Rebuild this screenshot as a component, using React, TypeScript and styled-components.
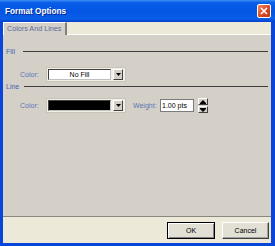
import React from 'react';
import styled, { createGlobalStyle } from 'styled-components';

const GlobalStyle = createGlobalStyle`
  html, body { margin: 0; padding: 0; }
  body {
    width: 275px;
    height: 246px;
    overflow: hidden;
    font-family: 'Liberation Sans', Arial, sans-serif;
  }
`;

const Window = styled.div`
  width: 275px;
  height: 246px;
  box-sizing: border-box;
  display: flex;
  flex-direction: column;
  background: #0845d8;
`;

const TitleBar = styled.div`
  height: 22px;
  flex: none;
  display: flex;
  align-items: center;
  justify-content: space-between;
  padding: 0 4px 0 5px;
  background: linear-gradient(#3c8cf6 0%, #0a5ee8 12%, #0354e4 50%, #0a5ee8 85%, #0440cc 100%);
`;

const Title = styled.span`
  color: #fff;
  font-weight: bold;
  font-size: 8.2px;
  text-shadow: 1px 1px 0 #0a2a8a;
`;

const CloseButton = styled.div`
  width: 14px;
  height: 14px;
  box-sizing: border-box;
  border: 1px solid #fff;
  border-radius: 2px;
  background: linear-gradient(135deg, #f08a6a, #d8441e 60%, #c2381a);
  display: flex;
  align-items: center;
  justify-content: center;
`;

const Body = styled.div`
  flex: 1;
  margin: 0 4px 3px 3px;
  display: flex;
  flex-direction: column;
  background: #ece9d8;
`;

const TabStrip = styled.div`
  height: 13px;
  flex: none;
  display: flex;
  background: #ece9d8;
  box-shadow: inset 0 -1px 0 #fff;
`;

const Tab = styled.div`
  width: 64px;
  box-sizing: border-box;
  background: #d4d0c8;
  border-top: 1px solid #fff;
  border-left: 1px solid #fff;
  border-right: 2px solid #808080;
  padding-left: 3px;
  font-size: 7.2px;
  line-height: 11px;
  color: #566c9c;
  white-space: nowrap;
`;

const Panel = styled.div`
  flex: 1;
  background: #d4d0c8;
  padding: 12px 3px 0 3px;
`;

const GroupHeader = styled.div<{ $gap: number }>`
  height: 8px;
  display: flex;
  align-items: center;
  gap: ${(p) => p.$gap}px;
  font-size: 7px;
  color: #4466b0;
  &::after {
    content: '';
    flex: 1;
    border-top: 1px solid #3c3c3c;
  }
`;

const Row = styled.div<{ $top: number }>`
  height: 15px;
  margin-top: ${(p) => p.$top}px;
  padding-left: 14px;
  display: flex;
  align-items: center;
`;

const Label = styled.span<{ $w: number; $ml?: number }>`
  width: ${(p) => p.$w}px;
  margin-left: ${(p) => p.$ml ?? 0}px;
  flex: none;
  font-size: 7px;
  color: #5c76b4;
`;

const Combo = styled.div`
  width: 80px;
  height: 15px;
  box-sizing: border-box;
  background: #f1efe5;
  border: 1px solid #c8c5b8;
  padding: 1px 2px 1px 1px;
  display: flex;
  gap: 2px;
`;

const ComboField = styled.div<{ $fill: string }>`
  flex: 1;
  background: ${(p) => p.$fill};
  border: 1px solid #404040;
  border-right-color: #c0c0c0;
  border-bottom-color: #c0c0c0;
  font-size: 7px;
  line-height: 9px;
  text-align: center;
  color: #000;
`;

const ArrowButton = styled.div`
  width: 10px;
  box-sizing: border-box;
  background: #d4d0c8;
  border: 1px solid;
  border-color: #fff #404040 #404040 #fff;
  display: flex;
  align-items: center;
  justify-content: center;
`;

const WeightInput = styled.div`
  width: 34px;
  height: 13px;
  box-sizing: border-box;
  background: #fff;
  border: 1px solid #7a7a7a;
  font-size: 7px;
  line-height: 11px;
  padding-left: 1px;
  color: #000;
`;

const Spinner = styled.div`
  width: 10px;
  height: 15px;
  margin-left: 4px;
  display: flex;
  flex-direction: column;
  gap: 1px;
`;

const SpinButton = styled.div`
  flex: 1;
  box-sizing: border-box;
  background: #d4d0c8;
  border: 1px solid;
  border-color: #fff #404040 #404040 #fff;
  display: flex;
  align-items: center;
  justify-content: center;
`;

const Footer = styled.div`
  height: 25px;
  flex: none;
  border-top: 1px solid #8a887e;
  background: #ece9d8;
  display: flex;
  justify-content: flex-end;
  align-items: center;
  gap: 7px;
  padding: 1px 2px 0 0;
`;

const Button = styled.div<{ $w: number; $default?: boolean }>`
  width: ${(p) => p.$w}px;
  height: 17px;
  box-sizing: border-box;
  background: #e2dfd5;
  border: 1px solid;
  border-color: ${(p) => (p.$default ? '#000' : '#fff #404040 #404040 #fff')};
  box-shadow: ${(p) => (p.$default ? 'inset 1px 1px 0 #fff, inset -1px -1px 0 #808080' : 'inset -1px -1px 0 #a0a0a0')};
  font-size: 7px;
  display: flex;
  align-items: center;
  justify-content: center;
  color: #000;
`;

const DownArrow = () => (
  <svg width="5" height="3" viewBox="0 0 5 3">
    <path d="M0 0h5L2.5 3z" fill="#000" />
  </svg>
);

const SpinArrow = ({ up }: { up?: boolean }) => (
  <svg width="6" height="4" viewBox="0 0 6 4">
    {up ? (
      <path d="M3 0L6 3H0z M0 3h6v1H0z" fill="#000" />
    ) : (
      <path d="M0 0h6v1H0z M0 1h6L3 4z" fill="#000" />
    )}
  </svg>
);

const App = () => {
  return (
    <>
      <GlobalStyle />
      <Window>
        <TitleBar>
          <Title>Format Options</Title>
          <CloseButton>
            <svg width="8" height="8" viewBox="0 0 8 8">
              <path d="M1 1L7 7M7 1L1 7" stroke="#fff" strokeWidth="1.6" />
            </svg>
          </CloseButton>
        </TitleBar>
        <Body>
          <TabStrip>
            <Tab>Colors And Lines</Tab>
          </TabStrip>
          <Panel>
            <GroupHeader $gap={8}>Fill</GroupHeader>
            <Row $top={12}>
              <Label $w={26}>Color:</Label>
              <Combo>
                <ComboField $fill="#fff">No Fill</ComboField>
                <ArrowButton>
                  <DownArrow />
                </ArrowButton>
              </Combo>
            </Row>
            <GroupHeader $gap={5}>Line</GroupHeader>
            <Row $top={8}>
              <Label $w={26}>Color:</Label>
              <Combo>
                <ComboField $fill="#000" />
                <ArrowButton>
                  <DownArrow />
                </ArrowButton>
              </Combo>
              <Label $w={27} $ml={7}>Weight:</Label>
              <WeightInput>1.00 pts</WeightInput>
              <Spinner>
                <SpinButton>
                  <SpinArrow up />
                </SpinButton>
                <SpinButton>
                  <SpinArrow />
                </SpinButton>
              </Spinner>
            </Row>
          </Panel>
          <Footer>
            <Button $w={48} $default>OK</Button>
            <Button $w={47}>Cancel</Button>
          </Footer>
        </Body>
      </Window>
    </>
  );
};

export default App;
